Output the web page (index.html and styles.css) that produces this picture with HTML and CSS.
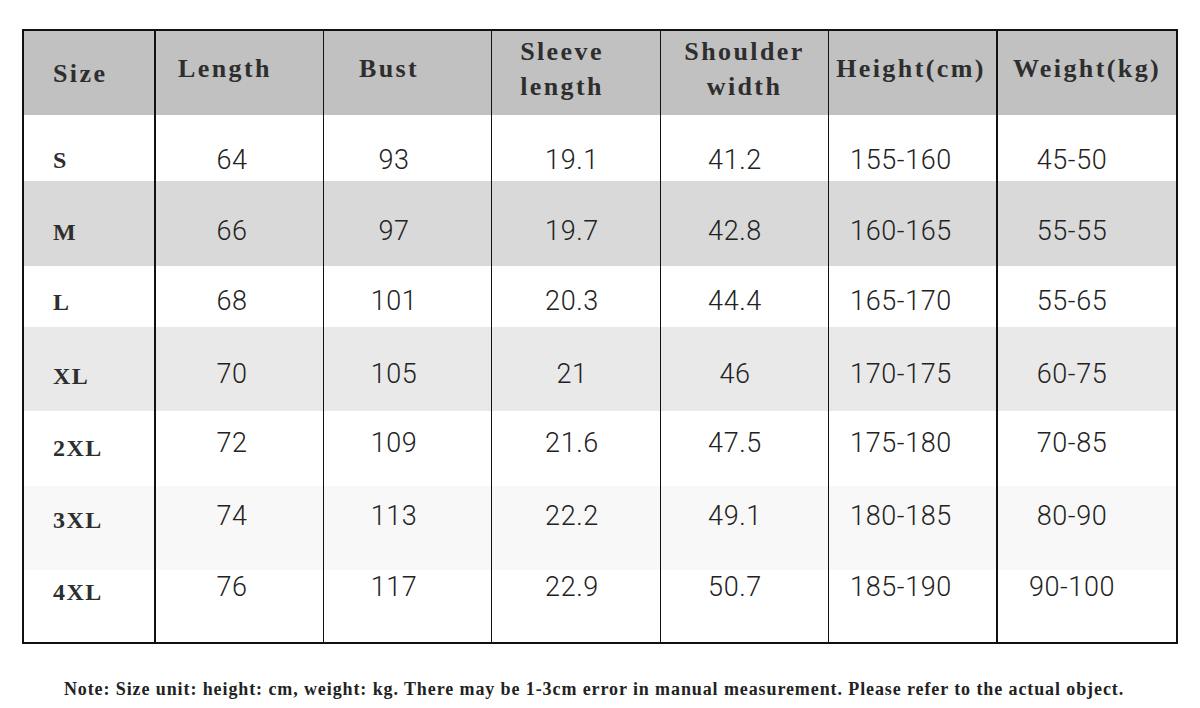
FILE: index.html
```html
<!DOCTYPE html>
<html lang="en">
<head>
<meta charset="utf-8">
<title>Size chart</title>
<link rel="stylesheet" href="styles.css">
</head>
<body>
<div class="page">
  <div class="table">
    <div class="row head">
      <div class="cell sz">Size</div>
      <div class="cell">Length</div>
      <div class="cell">Bust</div>
      <div class="cell">Sleeve<br>length</div>
      <div class="cell">Shoulder<br>width</div>
      <div class="cell">Height(cm)</div>
      <div class="cell">Weight(kg)</div>
    </div>
    <div class="row r1">
      <div class="cell sz">S</div><div class="cell">64</div><div class="cell">93</div><div class="cell">19.1</div><div class="cell">41.2</div><div class="cell">155-160</div><div class="cell">45-50</div>
    </div>
    <div class="row r2">
      <div class="cell sz">M</div><div class="cell">66</div><div class="cell">97</div><div class="cell">19.7</div><div class="cell">42.8</div><div class="cell">160-165</div><div class="cell">55-55</div>
    </div>
    <div class="row r3">
      <div class="cell sz">L</div><div class="cell">68</div><div class="cell">101</div><div class="cell">20.3</div><div class="cell">44.4</div><div class="cell">165-170</div><div class="cell">55-65</div>
    </div>
    <div class="row r4">
      <div class="cell sz">XL</div><div class="cell">70</div><div class="cell">105</div><div class="cell">21</div><div class="cell">46</div><div class="cell">170-175</div><div class="cell">60-75</div>
    </div>
    <div class="row r5">
      <div class="cell sz">2XL</div><div class="cell">72</div><div class="cell">109</div><div class="cell">21.6</div><div class="cell">47.5</div><div class="cell">175-180</div><div class="cell">70-85</div>
    </div>
    <div class="row r6">
      <div class="cell sz">3XL</div><div class="cell">74</div><div class="cell">113</div><div class="cell">22.2</div><div class="cell">49.1</div><div class="cell">180-185</div><div class="cell">80-90</div>
    </div>
    <div class="row r7">
      <div class="cell sz">4XL</div><div class="cell">76</div><div class="cell">117</div><div class="cell">22.9</div><div class="cell">50.7</div><div class="cell">185-190</div><div class="cell">90-100</div>
    </div>
  </div>
  <p class="note">Note: Size unit: height: cm, weight: kg. There may be 1-3cm error in manual measurement. Please refer to the actual object.</p>
</div>
</body>
</html>
```

FILE: styles.css
```css
html, body {
  margin: 0;
  padding: 0;
  background: #ffffff;
}

.page {
  padding: 29px 22px 0 22px;
}

.table {
  width: 1156px;
  box-sizing: border-box;
  border: 2px solid #111111;
}

.row {
  display: grid;
  grid-template-columns: 130px 169px 168px 169px 168px 168px 180px;
  --pt: 30px;
  --d: 0px;
}

.cell {
  box-sizing: border-box;
  border-left: 1px solid #111111;
  text-align: center;
  padding-top: var(--pt);
  font-family: Roboto, "Liberation Sans", sans-serif;
  font-weight: 300;
  font-size: 27px;
  line-height: 30px;
  letter-spacing: 0.6px;
  color: #222222;
}

.cell:nth-child(2),
.cell:nth-child(7) {
  border-left-width: 2px;
}

.cell:nth-child(2) { padding-right: 15px; }
.cell:nth-child(3) { padding-right: 27px; }
.cell:nth-child(4) { padding-right: 8px; }
.cell:nth-child(5) { padding-right: 19px; }
.cell:nth-child(6) { padding-right: 23px; }
.cell:nth-child(7) { padding-right: 30px; }

.cell.sz {
  border-left: 0;
  text-align: left;
  padding-left: 29px;
  padding-top: calc(var(--pt) + var(--d));
  font-family: "Liberation Serif", serif;
  font-weight: 700;
  font-size: 24px;
  letter-spacing: 1.5px;
  color: #2e2e2e;
}

/* header */
.head {
  height: 84px;
  background: #c1c1c1;
  align-items: center;
}

.head .cell {
  align-self: stretch;
  display: flex;
  flex-direction: column;
  justify-content: center;
  padding-top: 0;
  padding-bottom: 9px;
  font-family: "Liberation Serif", serif;
  font-weight: 700;
  font-size: 26px;
  line-height: 35px;
  letter-spacing: 2.4px;
  color: #2e2e2e;
}

.head .cell.sz {
  padding-top: 0;
  padding-bottom: 0;
}

.head .cell:nth-child(2) { padding-right: 29px; }
.head .cell:nth-child(3) { padding-right: 37px; }
.head .cell:nth-child(4) { padding-right: 28px; }
.head .cell:nth-child(5) { padding-right: 0; }
.head .cell:nth-child(6) { padding-right: 3px; }
.head .cell:nth-child(7) { padding-right: 0; }

.r1 { height: 66px; --pt: 30px; --d: 0px; }
.r2 { height: 85px; --pt: 35px; --d: 1px; background: #d9d9d9; }
.r3 { height: 61px; --pt: 20px; --d: 1px; }
.r4 { height: 84px; --pt: 32px; --d: 2px; background: #e9e9e9; }
.r5 { height: 75px; --pt: 17px; --d: 5px; }
.r6 { height: 84px; --pt: 15px; --d: 4px; background: #f8f8f8; }
.r7 { height: 72px; --pt: 2px; --d: 5px; }

.note {
  margin: 35px 0 0 0;
  padding-right: 12px;
  text-align: center;
  font-family: "Liberation Serif", serif;
  font-weight: 700;
  font-size: 18px;
  line-height: 20px;
  letter-spacing: 0.9px;
  color: #222222;
}
```
